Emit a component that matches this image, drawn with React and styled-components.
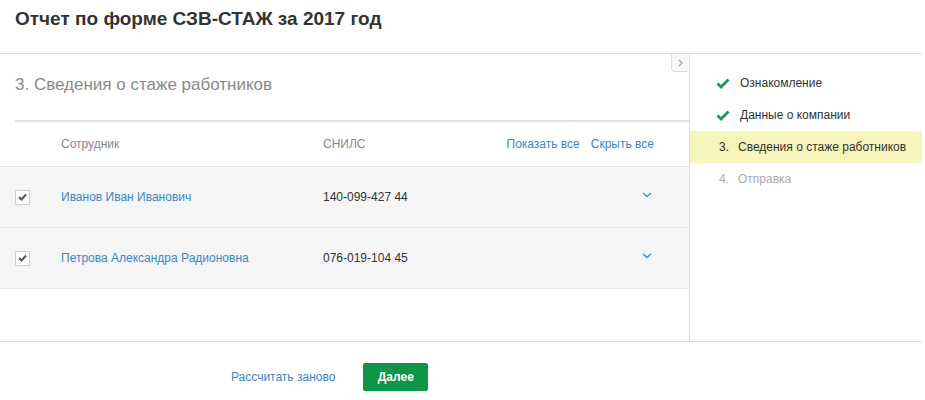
import React from "react";
import styled, { createGlobalStyle } from "styled-components";

const GlobalStyle = createGlobalStyle`
  body {
    margin: 0;
    background: #ffffff;
    font-family: "Liberation Sans", Arial, sans-serif;
  }
`;

const Page = styled.div`
  width: 922px;
`;

const Header = styled.div`
  box-sizing: border-box;
  height: 54px;
  padding: 8px 15px 0;
  border-bottom: 1px solid #dddddd;
`;

const Title = styled.h1`
  margin: 0;
  font-size: 19px;
  line-height: 22px;
  font-weight: bold;
  color: #333333;
`;

const Body = styled.div`
  display: flex;
  height: 288px;
  box-sizing: border-box;
  border-bottom: 1px solid #dddddd;
`;

const Main = styled.div`
  position: relative;
  width: 690px;
  box-sizing: border-box;
  border-right: 1px solid #dddddd;
`;

const CollapseButton = styled.div`
  position: absolute;
  top: 0;
  right: 1px;
  width: 17px;
  height: 18px;
  box-sizing: border-box;
  border: 1px solid #dddddd;
  border-top: none;
  border-right: none;
  border-radius: 0 0 0 4px;
  background: #f7f7f7;
  display: flex;
  align-items: center;
  justify-content: center;
`;

const SectionTitle = styled.h2`
  margin: 0 0 0 15px;
  height: 68px;
  box-sizing: border-box;
  padding-top: 20px;
  font-size: 17px;
  line-height: 22px;
  font-weight: normal;
  color: #8a8a8a;
  border-bottom: 2px solid #e2e2e2;
`;

const Row = styled.div`
  display: grid;
  grid-template-columns: 61px 262px 1fr auto;
  align-items: center;
  height: ${(p) => (p.head ? "45px" : "61px")};
  box-sizing: border-box;
  background: ${(p) => (p.head ? "#ffffff" : "#f5f5f5")};
  border-bottom: 1px solid #e8e8e8;
  font-size: 12px;
`;

const HeadCell = styled.div`
  color: #888888;
`;

const Cell = styled.div`
  color: ${(p) => (p.link ? "#3c85c8" : "#333333")};
`;

const Actions = styled.div`
  display: flex;
  gap: 11px;
  padding-right: 35px;
  justify-content: flex-end;
`;

const LinkText = styled.span`
  color: #3c85c8;
  font-size: 12px;
`;

const Checkbox = styled.div`
  margin-left: 15px;
  width: 15px;
  height: 15px;
  box-sizing: border-box;
  border: 1px solid #d0d0d0;
  background: #ffffff;
  display: flex;
  align-items: center;
  justify-content: center;
`;

const Expand = styled.div`
  padding-right: 37px;
  display: flex;
  justify-content: flex-end;
  margin-top: -5px;
`;

const Sidebar = styled.div`
  flex: 1;
  padding-top: 13px;
`;

const Step = styled.div`
  display: flex;
  align-items: center;
  height: 32px;
  padding-left: ${(p) => (p.done ? "26px" : "29px")};
  background: ${(p) => (p.active ? "#f6f5bb" : "transparent")};
  color: ${(p) => (p.muted ? "#aaaaaa" : "#333333")};
  font-size: 12px;
`;

const StepIcon = styled.span`
  width: 24px;
  display: inline-flex;
`;

const StepNum = styled.span`
  width: 19px;
  color: ${(p) => (p.muted ? "#aaaaaa" : "#333333")};
`;

const Footer = styled.div`
  display: flex;
  align-items: center;
  gap: 28px;
  padding: 21px 0 0 231px;
`;

const PrimaryButton = styled.button`
  width: 65px;
  height: 28px;
  border: none;
  border-radius: 2px;
  background: #0e9647;
  color: #ffffff;
  font-family: "Liberation Sans", Arial, sans-serif;
  font-size: 12px;
  font-weight: bold;
`;

const GreenCheck = () => (
  <svg width="14" height="11" viewBox="0 0 14 11">
    <path d="M1.5 5.5 L5 9 L12.5 1.5" fill="none" stroke="#1c9a4c" strokeWidth="2.8" />
  </svg>
);

const SmallCheck = () => (
  <svg width="9" height="8" viewBox="0 0 9 8">
    <path d="M1 4 L3.5 6.5 L8 1.5" fill="none" stroke="#555555" strokeWidth="2" />
  </svg>
);

const ChevronDown = () => (
  <svg width="10" height="6" viewBox="0 0 10 6">
    <path d="M1 1 L5 4.5 L9 1" fill="none" stroke="#4a90d0" strokeWidth="1.6" />
  </svg>
);

const ChevronRight = () => (
  <svg width="5" height="8" viewBox="0 0 5 8">
    <path d="M1 1 L4 4 L1 7" fill="none" stroke="#a8a8a8" strokeWidth="1.2" />
  </svg>
);

const employees = [
  { name: "Иванов Иван Иванович", snils: "140-099-427 44" },
  { name: "Петрова Александра Радионовна", snils: "076-019-104 45" },
];

const steps = [
  { label: "Ознакомление", done: true },
  { label: "Данные о компании", done: true },
  { label: "Сведения о стаже работников", num: "3.", active: true },
  { label: "Отправка", num: "4.", muted: true },
];

export default function App() {
  return (
    <Page>
      <GlobalStyle />
      <Header>
        <Title>Отчет по форме СЗВ-СТАЖ за 2017 год</Title>
      </Header>
      <Body>
        <Main>
          <CollapseButton>
            <ChevronRight />
          </CollapseButton>
          <SectionTitle>3. Сведения о стаже работников</SectionTitle>
          <Row head>
            <div />
            <HeadCell>Сотрудник</HeadCell>
            <HeadCell>СНИЛС</HeadCell>
            <Actions>
              <LinkText>Показать все</LinkText>
              <LinkText>Скрыть все</LinkText>
            </Actions>
          </Row>
          {employees.map((e) => (
            <Row key={e.snils}>
              <Checkbox>
                <SmallCheck />
              </Checkbox>
              <Cell link>{e.name}</Cell>
              <Cell>{e.snils}</Cell>
              <Expand>
                <ChevronDown />
              </Expand>
            </Row>
          ))}
        </Main>
        <Sidebar>
          {steps.map((s) => (
            <Step key={s.label} done={s.done} active={s.active} muted={s.muted}>
              {s.done ? (
                <StepIcon>
                  <GreenCheck />
                </StepIcon>
              ) : (
                <StepNum muted={s.muted}>{s.num}</StepNum>
              )}
              {s.label}
            </Step>
          ))}
        </Sidebar>
      </Body>
      <Footer>
        <LinkText>Рассчитать заново</LinkText>
        <PrimaryButton>Далее</PrimaryButton>
      </Footer>
    </Page>
  );
}
